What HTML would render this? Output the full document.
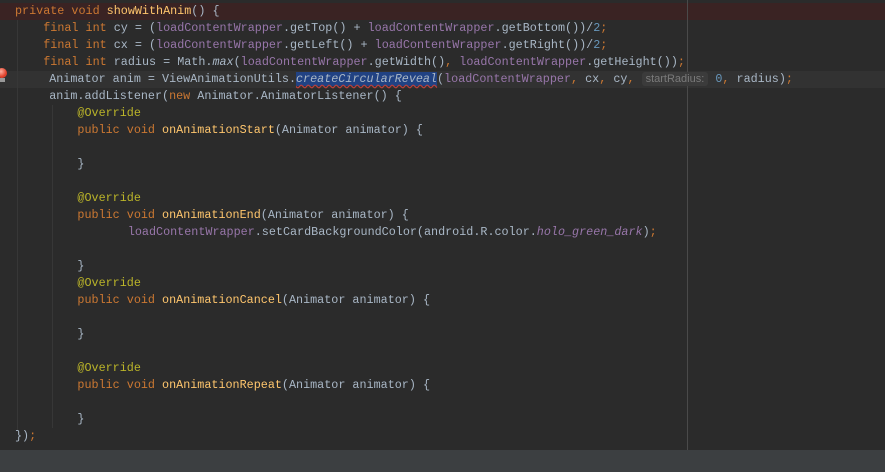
<!DOCTYPE html><html><head><style>
body{margin:0;width:885px;height:472px;background:#2b2b2b;overflow:hidden;position:relative;font-family:"Liberation Mono",monospace;font-size:11.75px;color:#a9b7c6}
.l{position:absolute;left:15px;height:17px;line-height:17px;white-space:pre;right:0}
.k{color:#cc7832}.m{color:#ffc66d}.f{color:#9876aa}.a{color:#bbb529}.n{color:#6897bb}.i{color:#9876aa;font-style:italic}
.sel{background:#214283;text-decoration:underline wavy #bc3f3c;text-underline-offset:2px}
.hint{background:#3b3b3b;color:#7a7a7a;font-family:"Liberation Sans",sans-serif;font-size:11px;padding:1px 4px;border-radius:3px}
</style></head><body>
<div style="position:absolute;left:0;top:3px;width:885px;height:17px;background:#3a2323"></div>
<div style="position:absolute;left:0;top:71px;width:885px;height:17px;background:#323232"></div>
<div style="position:absolute;left:687px;top:0;width:1px;height:450px;background:#4a4a4a"></div>
<div style="position:absolute;left:17px;top:20px;width:1px;height:410px;background:#373737"></div>
<div style="position:absolute;left:52px;top:105px;width:1px;height:323px;background:#373737"></div>
<div style="position:absolute;left:0;top:450px;width:885px;height:22px;background:#3c3f41"></div>
<div style="position:absolute;left:-3px;top:68px;width:10px;height:10px;border-radius:50%;background:radial-gradient(circle at 40% 35%,#ffb0a0,#e0402a 60%)"></div>
<div style="position:absolute;left:-1px;top:78px;width:6px;height:4px;background:#999"></div>
<div class="l" style="top:3px"><span class="k">private void </span><span class="m">showWithAnim</span>() {</div>
<div class="l" style="top:20px">    <span class="k">final int </span>cy = (<span class="f">loadContentWrapper</span>.getTop() + <span class="f">loadContentWrapper</span>.getBottom())/<span class="n">2</span><span class="k">;</span></div>
<div class="l" style="top:37px">    <span class="k">final int </span>cx = (<span class="f">loadContentWrapper</span>.getLeft() + <span class="f">loadContentWrapper</span>.getRight())/<span class="n">2</span><span class="k">;</span></div>
<div class="l" style="top:54px">    <span class="k">final int </span>radius = Math.<span style="font-style:italic">max</span>(<span class="f">loadContentWrapper</span>.getWidth()<span class="k">, </span><span class="f">loadContentWrapper</span>.getHeight())<span class="k">;</span></div>
<div class="l" style="top:71px;left:21px">    Animator anim = ViewAnimationUtils.<span class="sel" style="font-style:italic">createCircularReveal</span>(<span class="f">loadContentWrapper</span><span class="k">, </span>cx<span class="k">, </span>cy<span class="k">,</span> <span class="hint">startRadius:</span> <span class="n">0</span><span class="k">, </span>radius)<span class="k">;</span></div>
<div class="l" style="top:88px;left:21px">    anim.addListener(<span class="k">new </span>Animator.AnimatorListener() {</div>
<div class="l" style="top:105px;left:21px">        <span class="a">@Override</span></div>
<div class="l" style="top:122px;left:21px">        <span class="k">public void </span><span class="m">onAnimationStart</span>(Animator animator) {</div>
<div class="l" style="top:156px;left:21px">        }</div>
<div class="l" style="top:190px;left:21px">        <span class="a">@Override</span></div>
<div class="l" style="top:207px;left:21px">        <span class="k">public void </span><span class="m">onAnimationEnd</span>(Animator animator) {</div>
<div class="l" style="top:224px">                <span class="f">loadContentWrapper</span>.setCardBackgroundColor(android.R.color.<span class="i">holo_green_dark</span>)<span class="k">;</span></div>
<div class="l" style="top:258px;left:21px">        }</div>
<div class="l" style="top:275px;left:21px">        <span class="a">@Override</span></div>
<div class="l" style="top:292px;left:21px">        <span class="k">public void </span><span class="m">onAnimationCancel</span>(Animator animator) {</div>
<div class="l" style="top:326px;left:21px">        }</div>
<div class="l" style="top:360px;left:21px">        <span class="a">@Override</span></div>
<div class="l" style="top:377px;left:21px">        <span class="k">public void </span><span class="m">onAnimationRepeat</span>(Animator animator) {</div>
<div class="l" style="top:411px;left:21px">        }</div>
<div class="l" style="top:428px">})<span class="k">;</span></div>
</body></html>
